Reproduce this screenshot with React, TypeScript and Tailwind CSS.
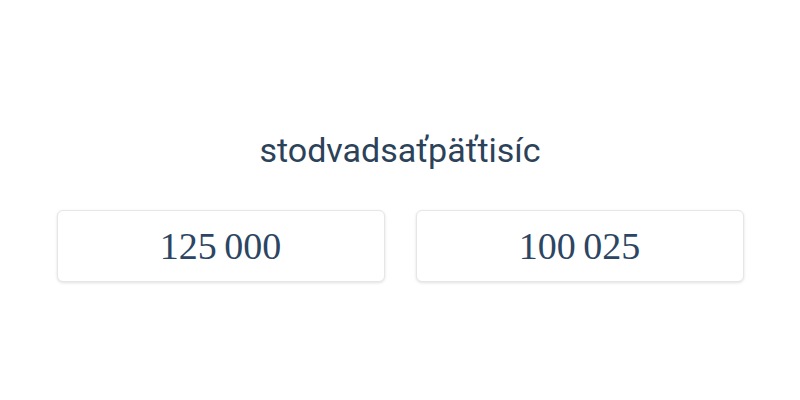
import React from 'react';

const options = ["125\u2009000", "100\u2009025"];

export default function App() {
  return (
    <div className="w-[800px] h-[400px] bg-white flex flex-col items-center">
      <h1
        className="mt-[128px] text-[34px] leading-[44px] text-[#2c4259]"
        style={{ fontFamily: "Roboto, sans-serif" }}
      >
        stodvadsaťpäťtisíc
      </h1>
      <div className="mt-[38px] grid grid-cols-2 gap-[31px] w-[687px]">
        {options.map((o, i) => (
          <button
            key={i}
            className="h-[72px] rounded-md border border-[#e6e6e6] bg-white shadow-[0_1px_3px_rgba(0,0,0,0.12)] text-[38px] text-[#2c4563] flex items-center justify-center"
            style={{ fontFamily: "'Liberation Serif', serif" }}
          >
            {o}
          </button>
        ))}
      </div>
    </div>
  );
}
